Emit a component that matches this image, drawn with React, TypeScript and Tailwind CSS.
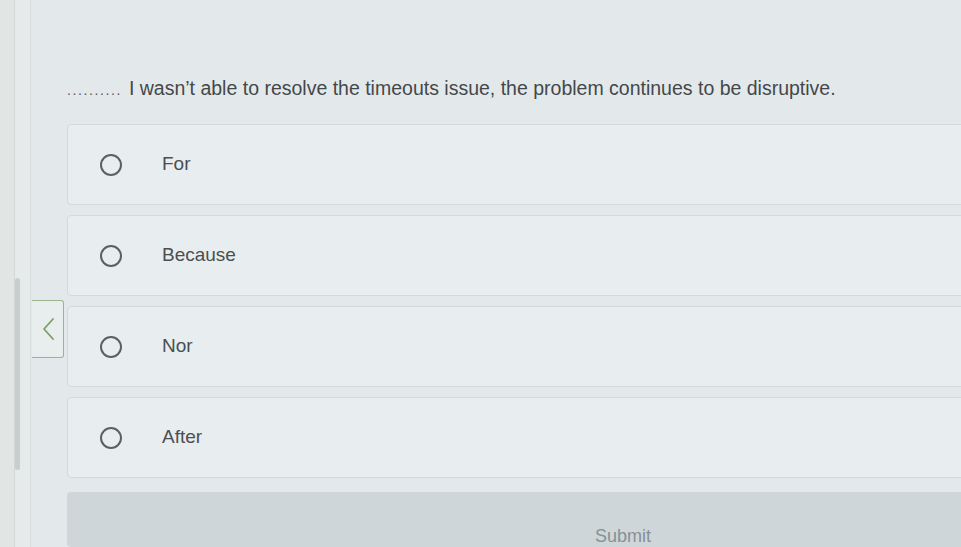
const options = ["For", "Because", "Nor", "After"];

const App = () => {
  return (
    <div
      className="relative flex h-[547px] w-[961px] overflow-hidden bg-[#e3e8ea] text-[#43484b]"
      style={{ fontFamily: '"Liberation Sans", Arial, sans-serif' }}
    >
      {/* left rail */}
      <div className="flex h-full w-[31px] shrink-0">
        <div className="h-full w-[15px] border-r border-[#d2d8d8] bg-[#e1e5e4]" />
        <div className="flex h-full w-[16px] flex-col border-r border-[#d6dcdd] bg-[#e6eaea] pt-[278px]">
          <div className="h-[192px] w-[5px] rounded-sm bg-[#c8cece]" />
        </div>
      </div>

      {/* back button */}
      <button className="absolute left-[32px] top-[300px] flex h-[58px] w-[32px] items-center justify-center rounded-r-[3px] border border-l-0 border-[#9bb58f] bg-[#e8eded]">
        <svg width="14" height="24" viewBox="0 0 14 24" fill="none">
          <path d="M12 2 L3 12 L12 22" stroke="#7aa06a" strokeWidth="1.8" strokeLinecap="round" strokeLinejoin="round" />
        </svg>
      </button>

      <div className="flex w-[1148px] shrink-0 flex-col pl-[36px]">
        <p className="mt-[74px] flex items-baseline text-[19.5px] leading-[28px]">
          <span className="mr-[7px] text-[14px] tracking-[1.6px] text-[#555a5d]">..........</span>
          I wasn’t able to resolve the timeouts issue, the problem continues to be disruptive.
        </p>

        <div className="mt-[20px] flex flex-col gap-[10px]">
          {options.map((option) => (
            <label
              key={option}
              className="flex h-[81px] cursor-pointer items-center rounded-[4px] border border-[#d3dadd] bg-[#e8edef] pl-[32px]"
            >
              <span className="h-[22px] w-[22px] shrink-0 rounded-full border-[2.5px] border-[#5b6063]" />
              <span className="ml-[40px] text-[19px] text-[#4a4f52]">{option}</span>
            </label>
          ))}
        </div>

        <button className="mt-[14px] h-[90px] rounded-[4px] bg-[#cfd6d9] pt-[33px] text-left">
          <span className="block text-center text-[18px] leading-[22px] text-[#869196]">Submit</span>
        </button>
      </div>
    </div>
  );
};

export default App;
